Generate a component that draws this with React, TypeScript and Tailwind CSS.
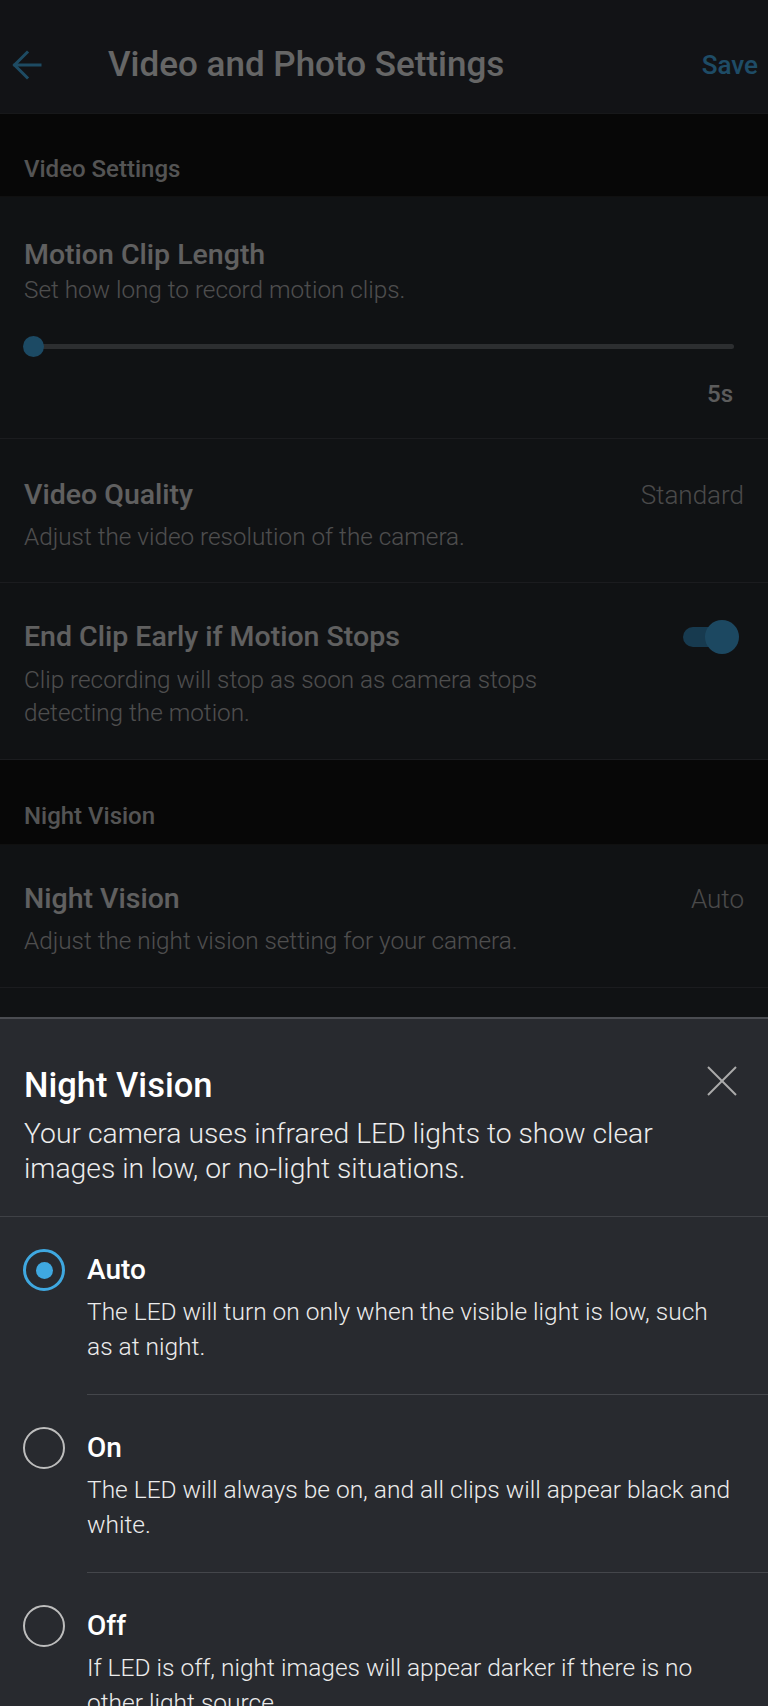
import type { ReactNode } from 'react';

const BackArrow = () => (
  <svg width="30" height="30" viewBox="0 0 30 30" fill="none" stroke="currentColor" strokeWidth="3" strokeLinecap="square">
    <path d="M28 15H3" />
    <path d="M15 2.5L2.5 15L15 27.5" />
  </svg>
);

const CloseIcon = () => (
  <svg width="30" height="30" viewBox="0 0 30 30" fill="none" stroke="currentColor" strokeWidth="2">
    <path d="M1 1L29 29" />
    <path d="M29 1L1 29" />
  </svg>
);

const SectionHeader = ({ label, className = '' }: { label: string; className?: string }) => (
  <div className={`border-b border-[#2a2a2a] bg-[#121212] px-[24px] text-[24px] leading-[30px] font-medium text-[#d2d2d2] ${className}`}>
    {label}
  </div>
);

const Toggle = ({ on }: { on: boolean }) => (
  <div className="relative h-[38px] w-[56px]">
    <div className={`absolute top-[9px] left-0 h-[20px] w-[52px] rounded-full ${on ? 'bg-[#3a92c6]' : 'bg-[#6b6e73]'}`} />
    <div className={`absolute top-[2px] h-[34px] w-[34px] rounded-full ${on ? 'right-0 bg-[#47b4f3]' : 'left-0 bg-[#cfcfcf]'}`} />
  </div>
);

type RowProps = {
  title: string;
  description: string;
  value?: string;
  trailing?: ReactNode;
  className?: string;
  descClassName?: string;
};

const SettingRow = ({ title, description, value, trailing, className = '', descClassName = '' }: RowProps) => (
  <div className={`flex items-start border-b border-[#45484e] px-[24px] ${className}`}>
    <div className="flex-1">
      <div className="text-[28.5px] leading-[36px] font-medium text-[#f0f0f0]">{title}</div>
      <div className={`mt-[7px] text-[24.3px] leading-[33px] font-light text-[#c4c4c4] ${descClassName}`}>{description}</div>
    </div>
    {value && <div className="text-[26px] leading-[36px] font-light text-[#b8b8b8]">{value}</div>}
    {trailing}
  </div>
);

type Option = { id: string; label: string; description: string };

const options: Option[] = [
  { id: 'auto', label: 'Auto', description: 'The LED will turn on only when the visible light is low, such as at night.' },
  { id: 'on', label: 'On', description: 'The LED will always be on, and all clips will appear black and white.' },
  { id: 'off', label: 'Off', description: 'If LED is off, night images will appear darker if there is no other light source.' },
];

const Radio = ({ checked }: { checked: boolean }) =>
  checked ? (
    <div className="flex h-[42px] w-[42px] items-center justify-center rounded-full border-[3px] border-[#3fa8e0]">
      <div className="h-[17px] w-[17px] rounded-full bg-[#3fa8e0]" />
    </div>
  ) : (
    <div className="h-[42px] w-[42px] rounded-full border-2 border-[#bdbdbd]" />
  );

const App = () => {
  const selected = 'auto';

  return (
    <div className="relative h-[1706px] w-[768px] overflow-hidden bg-[#2a2d34] font-['Roboto',sans-serif]">
      <header className="flex h-[114px] items-center border-b border-[#3a3d43] bg-[#2d3037] pt-[16px] pr-[10px] pl-[12px]">
        <span className="text-[#4bbcf8]">
          <BackArrow />
        </span>
        <h1 className="ml-[66px] text-[35px] leading-[44px] font-medium text-white">Video and Photo Settings</h1>
        <button className="ml-auto text-[26px] leading-[36px] font-medium text-[#4dbfff]">Save</button>
      </header>

      <SectionHeader label="Video Settings" className="h-[83px] pt-[40px]" />

      <div className="border-b border-[#45484e] pt-[40px] pb-[28px]">
        <div className="ml-[24px] text-[28.5px] leading-[36px] font-medium text-[#f0f0f0]">Motion Clip Length</div>
        <div className="ml-[24px] text-[24.3px] leading-[34px] font-light text-[#c4c4c4]">Set how long to record motion clips.</div>
        <div className="relative mt-[29px] ml-[23px] h-[21px] w-[711px]">
          <div className="absolute top-[8px] right-0 left-[10px] h-[5px] rounded-full bg-[#6e7378]" />
          <div className="absolute top-0 left-0 h-[21px] w-[21px] rounded-full bg-[#46b9fa]" />
        </div>
        <div className="mt-[21px] mr-[35px] text-right text-[24px] leading-[32px] font-medium text-[#e6e6e6]">5s</div>
      </div>

      <SettingRow
        title="Video Quality"
        description="Adjust the video resolution of the camera."
        value="Standard"
        className="pt-[38px] pb-[29px]"
      />

      <SettingRow
        title="End Clip Early if Motion Stops"
        description="Clip recording will stop as soon as camera stops detecting the motion."
        trailing={
          <div className="mt-[-1px] mr-[5px]">
            <Toggle on />
          </div>
        }
        className="pt-[36px] pb-[30px]"
        descClassName="mt-[8px] max-w-[580px]"
      />

      <SectionHeader label="Night Vision" className="h-[85px] pt-[41px]" />

      <SettingRow
        title="Night Vision"
        description="Adjust the night vision setting for your camera."
        value="Auto"
        className="pt-[36px] pb-[30px]"
      />

      {/* scrim over the settings page */}
      <div className="absolute inset-0 bg-black/60" />

      {/* bottom sheet */}
      <div className="absolute inset-x-0 top-[1017px] bottom-0 border-t-2 border-[#4a4c51] bg-[#282a2f]">
        <div className="border-b border-[#3f4146] pt-[44px] pr-[31px] pb-[30px] pl-[24px]">
          <div className="flex items-start justify-between">
            <h2 className="text-[34.5px] leading-[44px] font-medium text-white">Night Vision</h2>
            <button className="mt-[3px] text-[#ababab]">
              <CloseIcon />
            </button>
          </div>
          <p className="mt-[9px] text-[28.3px] leading-[35px] font-light text-[#ececec]">
            Your camera uses infrared LED lights to show clear images in low, or no-light situations.
          </p>
        </div>

        {options.map((option) => (
          <div key={option.id} className="flex pl-[23px]">
            <div className="mt-[32px] mr-[22px] shrink-0">
              <Radio checked={option.id === selected} />
            </div>
            <div className="flex-1 border-b border-[#44464b] pt-[35px] pr-[33px] pb-[30px]">
              <div className="text-[28px] leading-[36px] font-medium text-white">{option.label}</div>
              <div className="mt-[6px] text-[24.5px] leading-[35px] font-light text-[#ececec]">{option.description}</div>
            </div>
          </div>
        ))}
      </div>
    </div>
  );
};

export default App;
